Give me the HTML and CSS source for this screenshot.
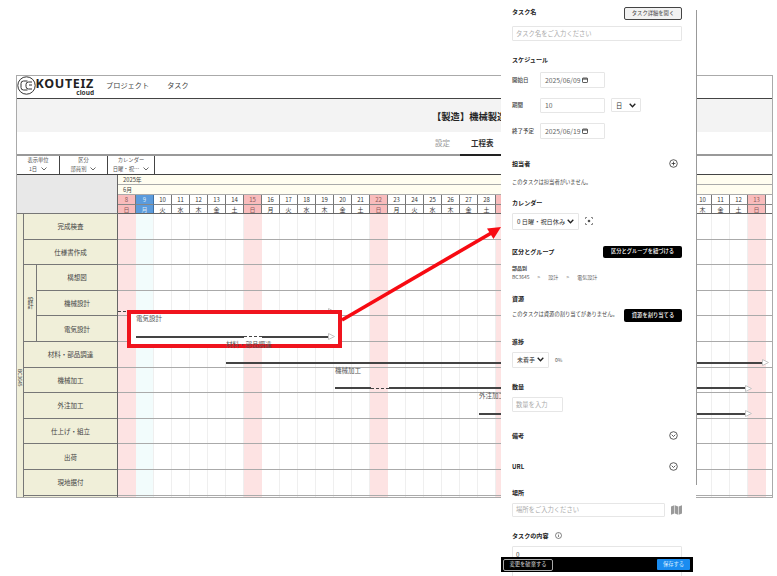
FILE: index.html
```html
<!DOCTYPE html>
<html lang="ja">
<head>
<meta charset="utf-8">
<title>KOUTEIZ cloud 工程表</title>
<link rel="stylesheet" href="styles.css">
</head>
<body>
<div class="app">
  <header class="topbar">
    <svg class="logo-mark" width="19" height="19" viewBox="0 0 19 19" fill="none" stroke="#333" stroke-width="1"><circle cx="9.5" cy="9.5" r="8.7"/><path d="M10.5 5H6.5Q4 5 4 7.5v4Q4 14 6.5 14h4"/><path d="M15 6h-3.500Q9 6 9 8.500v2Q9 13 11.500 13H15"/><path d="M15 9h-3" /></svg>
    <div class="brand"><span class="brand-name">KOUTEIZ</span><span class="brand-sub">cloud</span></div>
    <nav class="nav"><span>プロジェクト</span><span>タスク</span></nav>
  </header>
  <div class="title-band"><h1>【製造】機械製造ライン</h1></div>
  <div class="tabs"><span class="tab">設定</span><span class="tab tab-on">工程表</span></div>
  <div class="filters">
    <div class="filter f1"><span>表示単位</span><span class="fv">1日 <svg class="chev" width="6" height="4" viewBox="0 0 6 4"><path d="M.5.5 3 3 5.500.5"/></svg></span></div>
    <div class="filter f2"><span>区分</span><span class="fv">部員別 <svg class="chev" width="6" height="4" viewBox="0 0 6 4"><path d="M.5.5 3 3 5.500.5"/></svg></span></div>
    <div class="filter f3"><span>カレンダー</span><span class="fv">日曜・祝… <svg class="chev" width="6" height="4" viewBox="0 0 6 4"><path d="M.5.5 3 3 5.500.5"/></svg></span></div>
  </div>
  <div class="gantt">
    <div class="corner"></div>
    <div class="cal">
      <div class="cal-band">2025年</div>
      <div class="cal-band">6月</div>
      <div class="days">
        <b class="sun">8</b><b class="sun">日</b>
        <b class="today">9</b><b class="today">月</b>
        <b>10</b><b>火</b><b>11</b><b>水</b><b>12</b><b>木</b><b>13</b><b>金</b><b>14</b><b>土</b>
        <b class="sun">15</b><b class="sun">日</b>
        <b>16</b><b>月</b><b>17</b><b>火</b><b>18</b><b>水</b><b>19</b><b>木</b><b>20</b><b>金</b><b>21</b><b>土</b>
        <b class="sun">22</b><b class="sun">日</b>
        <b>23</b><b>月</b><b>24</b><b>火</b><b>25</b><b>水</b><b>26</b><b>木</b><b>27</b><b>金</b><b>28</b><b>土</b>
        <b class="sun">29</b><b class="sun">日</b>
        <b>30</b><b>月</b><b>1</b><b>火</b><b>2</b><b>水</b><b>3</b><b>木</b><b>4</b><b>金</b><b>5</b><b>土</b>
        <b class="sun">6</b><b class="sun">日</b>
        <b>7</b><b>月</b><b>8</b><b>火</b><b>9</b><b>水</b><b>10</b><b>木</b><b>11</b><b>金</b><b>12</b><b>土</b>
        <b class="sun">13</b><b class="sun">日</b>
        <b></b><b></b>
      </div>
    </div>
    <div class="labels">
      <div class="grp">BC3645</div>
      <div class="lbl wide">完成検査</div>
      <div class="lbl wide">仕様書作成</div>
      <div class="sub">設計</div>
      <div class="lbl">構想図</div>
      <div class="lbl">機械設計</div>
      <div class="lbl">電気設計</div>
      <div class="lbl wide">材料・部品調達</div>
      <div class="lbl wide">機械加工</div>
      <div class="lbl wide">外注加工</div>
      <div class="lbl wide">仕上げ・組立</div>
      <div class="lbl wide">出荷</div>
      <div class="lbl wide">現地据付</div>
      <div class="lbl wide"></div>
    </div>
    <div class="chart">
      <div class="cols">
        <i class="c-sun"></i><i class="c-today"></i><i></i><i></i><i></i><i></i><i></i>
        <i class="c-sun"></i><i></i><i></i><i></i><i></i><i></i><i></i>
        <i class="c-sun"></i><i></i><i></i><i></i><i></i><i></i><i></i>
        <i class="c-sun"></i><i></i><i></i><i></i><i></i><i></i><i></i>
        <i class="c-sun"></i><i></i><i></i><i></i><i></i><i></i><i></i>
        <i class="c-sun"></i><i></i>
      </div>
      <div class="rows">
        <u></u><u></u><u></u><u></u><u></u><u></u><u></u><u></u><u></u><u></u><u></u><u></u>
      </div>
      <div class="canvas">
        <div class="task t-kikai"><div class="line"><span class="dash" style="width:18px"></span><span class="seg" style="width:192px"></span><svg class="tip" width="7" height="7" viewBox="0 0 7 7"><path d="M.5.5 6.500 3.500.5 6.500Z"/></svg></div></div>
        <div class="selected"></div>
        <div class="task t-denki"><span class="name">電気設計</span><div class="line"><span class="seg" style="width:108px"></span><span class="dash" style="width:18px"></span><span class="seg" style="width:66px"></span><svg class="tip" width="7" height="7" viewBox="0 0 7 7"><path d="M.5.5 6.500 3.500.5 6.500Z"/></svg></div></div>
        <div class="task t-zairyo"><span class="name">材料・部品調達</span><div class="line"><span class="seg" style="width:536px"></span><svg class="tip" width="7" height="7" viewBox="0 0 7 7"><path d="M.5.5 6.500 3.500.5 6.500Z"/></svg></div></div>
        <div class="task t-kakou"><span class="name">機械加工</span><div class="line"><span class="seg" style="width:36px"></span><span class="dash" style="width:18px"></span><span class="seg" style="width:356px"></span><svg class="tip" width="7" height="7" viewBox="0 0 7 7"><path d="M.5.5 6.500 3.500.5 6.500Z"/></svg></div></div>
        <div class="task t-gaichu"><span class="name">外注加工</span><div class="line"><span class="seg" style="width:266px"></span><svg class="tip" width="7" height="7" viewBox="0 0 7 7"><path d="M.5.5 6.500 3.500.5 6.500Z"/></svg></div></div>
      </div>
    </div>
  </div>
</div>

<svg class="callout" width="170" height="110" viewBox="0 0 170 110"><path d="M1 94 152 6" stroke="#f70a12" stroke-width="3.600" fill="none"/><path d="M160 1 152.500 13 146 2.500Z" fill="#f70a12"/></svg>

<aside class="panel">
  <div class="row-between first"><h2>タスク名</h2><button class="btn-outline">タスク詳細を開く</button></div>
  <div class="field ph full m6">タスク名をご入力ください</div>

  <h2 class="m14">スケジュール</h2>
  <div class="sched">
    <span class="cap">開始日</span><div class="field date">2025/06/09<svg class="cal-ic" width="6" height="6" viewBox="0 0 6 6"><rect x=".5" y="1" width="5" height="4.500" rx=".6" fill="none" stroke="#333" stroke-width=".8"/><path d="M.5 2h5" stroke="#333"/></svg></div><span></span>
    <span class="cap">期間</span><div class="field date">10</div><div class="field sel unit">日<svg class="chev dark" width="7" height="5" viewBox="0 0 7 5"><path d="M.7.7 3.500 3.700 6.300.7"/></svg></div>
    <span class="cap">終了予定</span><div class="field date">2025/06/19<svg class="cal-ic" width="6" height="6" viewBox="0 0 6 6"><rect x=".5" y="1" width="5" height="4.500" rx=".6" fill="none" stroke="#333" stroke-width=".8"/><path d="M.5 2h5" stroke="#333"/></svg></div><span></span>
  </div>

  <div class="row-between m20"><h2>担当者</h2><svg class="ic" width="9" height="9" viewBox="0 0 9 9" fill="none" stroke="#333" stroke-width=".8"><circle cx="4.500" cy="4.500" r="3.800"/><path d="M4.500 2.600v3.800M2.600 4.500h3.800"/></svg></div>
  <p class="note m8">このタスクは担当者がいません。</p>

  <h2 class="m11">カレンダー</h2>
  <div class="cal-row m5">
    <div class="field sel calsel">0 日曜・祝日休み<svg class="chev dark" width="7" height="5" viewBox="0 0 7 5"><path d="M.7.7 3.500 3.700 6.300.7"/></svg></div>
    <svg width="8" height="8" viewBox="0 0 8 8" fill="none" stroke="#555" stroke-width=".7"><path d="M.5 2V.5H2M6 .5h1.500V2M7.500 6v1.500H6M2 7.500H.5V6"/><circle cx="4" cy="4" r="1.300" fill="#555" stroke="none"/></svg>
  </div>

  <div class="row-between m16"><h2>区分とグループ</h2><button class="btn-dark b-wide">区分とグループを紐づける</button></div>
  <p class="tiny strong m6">部品別</p>
  <p class="tiny crumb"><span>BC3645</span><span>&gt;</span><span>設計</span><span>&gt;</span><span>電気設計</span></p>

  <h2 class="m13">資源</h2>
  <div class="row-between top m5"><p class="note">このタスクは資源の割り当てがありません。</p><button class="btn-dark b-res">資源を割り当てる</button></div>

  <h2 class="m15">進捗</h2>
  <div class="cal-row m5">
    <div class="field sel prog">未着手<svg class="chev dark" width="7" height="5" viewBox="0 0 7 5"><path d="M.7.7 3.500 3.700 6.300.7"/></svg></div>
    <span class="tiny">0%</span>
  </div>

  <h2 class="m14">数量</h2>
  <div class="field ph qty m5">数量を入力</div>

  <div class="row-between m19"><h2>備考</h2><svg class="ic" width="9" height="9" viewBox="0 0 9 9" fill="none" stroke="#333" stroke-width=".8"><circle cx="4.500" cy="4.500" r="3.800"/><path d="M2.700 3.700 4.500 5.500 6.300 3.700"/></svg></div>
  <div class="row-between m21"><h2>URL</h2><svg class="ic" width="9" height="9" viewBox="0 0 9 9" fill="none" stroke="#333" stroke-width=".8"><circle cx="4.500" cy="4.500" r="3.800"/><path d="M2.700 3.700 4.500 5.500 6.300 3.700"/></svg></div>

  <h2 class="m16">場所</h2>
  <div class="place m5">
    <div class="field ph">場所をご入力ください</div>
    <svg width="11" height="10" viewBox="0 0 11 10" fill="#9a9a9a"><path d="M0 1.500 3.300.3V8.500L0 9.700ZM3.900.3 7.100 1.500V9.700L3.900 8.500ZM7.700 1.500 11 .3V8.500L7.700 9.700Z"/></svg>
  </div>

  <div class="h-info m14"><h2>タスクの内容</h2><svg width="7" height="7" viewBox="0 0 7 7" fill="none" stroke="#333" stroke-width=".6"><circle cx="3.500" cy="3.500" r="3"/><path d="M3.500 3v2M3.500 1.700v.7"/></svg></div>
  <div class="field area m5">0</div>

  <div class="footer">
    <button class="btn-discard">変更を破棄する</button>
    <button class="btn-save">保存する</button>
  </div>
</aside>
</body>
</html>
```

FILE: styles.css
```css
* { box-sizing: border-box; }
html, body { margin: 0; padding: 0; }
body {
  width: 777px;
  height: 576px;
  overflow: hidden;
  position: relative;
  background: #fff;
  padding: 75px 0 0 16px;
  font-family: "Noto Sans CJK JP", "Noto Sans", sans-serif;
  color: #333;
  font-size: 6.500px;
}
h1, h2, p { margin: 0; }

/* window */
.app {
  width: 757px;
  height: 423px;
  border: 1px solid #aaa;
  overflow: hidden;
}
.topbar {
  height: 23px;
  border-bottom: 1px solid #444;
  display: flex;
  align-items: flex-start;
}
.logo-mark { margin-right: 1px; flex: none; }
.brand { display: flex; flex-direction: column; align-items: flex-end; width: 57px; padding-top: 1px; }
.brand-name { font: 700 12.500px/13px "Noto Sans", sans-serif; letter-spacing: .7px; color: #222; white-space: nowrap; }
.brand-sub { font: 700 6.500px/6px "Noto Sans", sans-serif; color: #333; }
.nav { display: flex; gap: 18px; margin-left: 12px; padding-top: 4px; font-size: 7.200px; line-height: 11px; color: #444; }
.title-band { height: 33px; background: #f3f3f3; padding-left: 415px; display: flex; align-items: center; }
h1 { font-size: 9.300px; font-weight: 700; line-height: 12px; white-space: nowrap; color: #222; }
.tabs { height: 24px; border-bottom: 2px solid #999; display: flex; padding-left: 418px; font-size: 7.500px; line-height: 22px; }
.tab { color: #999; width: 25px; }
.tab-on { color: #333; font-weight: 700; width: 46px; padding-left: 11px; border-bottom: 2px solid #222; height: 24px; }
.filters { height: 19px; border-bottom: 1px solid #444; display: flex; }
.filter {
  border-right: 1px solid #444;
  display: flex;
  flex-direction: column;
  align-items: center;
  font-size: 5.300px;
  line-height: 8.500px;
  color: #555;
}
.f1 { width: 43px; }
.f2 { width: 48px; }
.f3 { width: 47px; }
.fv { display: flex; align-items: center; gap: 4px; }
.chev { fill: none; stroke: #444; stroke-width: .8; flex: none; }
.chev.dark { stroke: #222; stroke-width: 1.300; }

/* gantt */
.gantt { display: grid; grid-template-columns: 101px 655px; grid-template-rows: 39px 290px; }
.corner { background: #e8e8e8; border-right: 1px solid #666; border-bottom: 1px solid #777; }
.cal { overflow: hidden; border-bottom: 1px solid #666; }
.cal-band { height: 10px; background: #fffdf0; border-bottom: 1px solid #aaa; padding-left: 5px; font-size: 5.800px; line-height: 9px; color: #444; }
.days { display: grid; grid-auto-flow: column; grid-template-rows: 10px 9px; grid-auto-columns: 18px; }
.days b {
  font-weight: 400;
  text-align: center;
  font-size: 6px;
  line-height: 10px;
  border-right: 1px solid #777;
  border-bottom: 1px solid #888;
  background: #fff;
  color: #333;
}
.days b.sun { background: #f9bcbc; color: #8a5a5a; }
.days b.today { background: #5b9bdc; color: #dfeaf5; border-right-color: #3c6fa5; }

.labels {
  background: #f0efd9;
  border-right: 1px solid #666;
  display: grid;
  grid-template-columns: 7px 13px 80px;
  grid-auto-rows: 25.600px;
  height: 290px;
  overflow: hidden;
}
.grp {
  grid-row: 1 / span 12;
  border-right: 1px solid #777;
  writing-mode: vertical-rl;
  font-size: 5px;
  line-height: 6px;
  text-align: center;
  padding-top: 20px;
  color: #444;
}
.lbl {
  display: flex;
  align-items: center;
  justify-content: center;
  font-size: 6.500px;
  border-bottom: 1px solid #777;
  color: #444;
}
.wide { grid-column: 2 / span 2; }
.sub {
  grid-row: 3 / span 3;
  grid-column: 2;
  border-right: 1px solid #777;
  border-bottom: 1px solid #777;
  writing-mode: vertical-rl;
  text-align: center;
  font-size: 6px;
  line-height: 12px;
  color: #444;
}

.chart { display: grid; overflow: hidden; height: 290px; }
.cols, .rows, .canvas { grid-area: 1 / 1; }
.cols { display: grid; grid-auto-flow: column; grid-auto-columns: 18px; }
.cols i { border-right: 1px solid #efefef; }
.cols .c-sun { background: #fde3e3; border-right-color: #fde3e3; }
.cols .c-today { background: #f2fcfc; }
.rows { display: grid; grid-auto-rows: 25.600px; }
.rows u { border-bottom: 1px solid #aaa; }
.canvas { position: relative; }

.task { position: absolute; display: flex; flex-direction: column; align-items: flex-start; }
.name { font-size: 6.500px; line-height: 8px; color: #555; white-space: nowrap; margin-bottom: 11.500px; }
.line { display: flex; align-items: center; height: 6px; }
.seg { height: 2px; background: #444; flex: none; }
.dash { height: 0; border-top: 1px dashed #444; flex: none; }
.tip { flex: none; fill: #fff; stroke: #c4c4c4; stroke-width: 1; }
.t-kikai { left: 0; top: 94px; }
.selected {
  position: absolute;
  left: 9px;
  top: 96px;
  width: 215px;
  height: 38px;
  background: #fff;
  border: 4px solid #f0141e;
}
.t-denki { left: 18px; top: 100px; }
.t-zairyo { left: 108px; top: 126px; }
.t-kakou { left: 217px; top: 151.500px; }
.t-gaichu { left: 361px; top: 177px; }

.callout { position: absolute; left: 341px; top: 226px; z-index: 3; }

/* task side panel */
.panel {
  position: absolute;
  left: 501px;
  top: 0;
  width: 195px;
  height: 576px;
  background: #fff;
  padding: 0 14px 0 11px;
  overflow: hidden;
  font-size: 6.300px;
}
body::after {
  content: "";
  position: absolute;
  left: 696px;
  top: 10px;
  width: 1px;
  height: 475px;
  background: #999;
}
h2 { font-size: 6.100px; line-height: 10px; font-weight: 700; color: #222; }
.row-between { display: flex; justify-content: space-between; align-items: center; }
.row-between.top { align-items: flex-start; }
.first { padding-top: 7px; }
.first h2 { margin-bottom: 3px; }
.ic { margin-right: 4px; }
.m5 { margin-top: 5px; } .m6 { margin-top: 6px; } .m7 { margin-top: 7px; } .m8 { margin-top: 8px; }
.m11 { margin-top: 11px; } .m13 { margin-top: 13px; } .m14 { margin-top: 14px; }
.m15 { margin-top: 15px; } .m16 { margin-top: 16px; } .m19 { margin-top: 19px; }
.m20 { margin-top: 20px; } .m21 { margin-top: 21px; }

.field {
  border: 1px solid #e6e6e6;
  border-radius: 1px;
  height: 15px;
  display: flex;
  align-items: center;
  padding: 0 3px;
  color: #444;
  background: #fff;
}
.ph { color: #aaa; }
.full { width: 170px; }
.sched { display: grid; grid-template-columns: 28px 65px 30px; row-gap: 10px; margin-top: 7px; align-items: center; }
.cap { font-size: 5.500px; color: #444; font-weight: 500; }
.date { width: 65px; height: 15.670px; padding-left: 4px; gap: 1px; font-size: 6.800px; color: #666; }
.sel { justify-content: space-between; color: #333; padding: 0 4px; }
.unit { margin-left: 6px; width: 30px; height: 14px; }
.cal-row { display: flex; align-items: center; gap: 6px; }
.calsel { width: 67px; height: 17px; font-size: 6.200px; }
.prog { width: 37px; height: 16px; font-size: 6px; }
.note { font-size: 5.300px; line-height: 10px; color: #444; white-space: nowrap; }
.tiny { font-size: 5px; line-height: 8px; color: #555; }
.strong { font-weight: 700; color: #444; }
.crumb { display: flex; gap: 8px; margin-top: 1px; }
.qty { width: 51px; }
.place { display: flex; align-items: center; gap: 6px; }
.place .field { width: 153px; height: 14px; }
.h-info { display: flex; align-items: center; gap: 6px; }
.area { width: 170px; height: 40px; align-items: flex-start; padding-top: 3px; }

button { font-family: inherit; margin: 0; padding: 0; font-size: 5.300px; line-height: 1; cursor: default; white-space: nowrap; }
.btn-outline { width: 58px; height: 13px; background: #f2f2f2; border: 1px solid #444; border-radius: 2px; color: #444; }
.btn-dark { height: 13px; background: #000; color: #fff; border: 0; border-radius: 2px; font-weight: 500; }
.b-wide { width: 79px; height: 12px; }
.b-res { width: 58px; }
.footer {
  position: absolute;
  left: 0;
  top: 557px;
  width: 192px;
  height: 15px;
  background: #000;
  display: flex;
  justify-content: space-between;
  align-items: center;
  padding: 0 3px 0 2px;
}
.btn-discard { width: 50px; height: 12px; background: #000; color: #ddd; border: 1px solid #aaa; border-radius: 2px; }
.btn-save { width: 33px; height: 11px; background: #1a8cf0; color: #d6ebff; border: 0; border-radius: 1px; }
```
